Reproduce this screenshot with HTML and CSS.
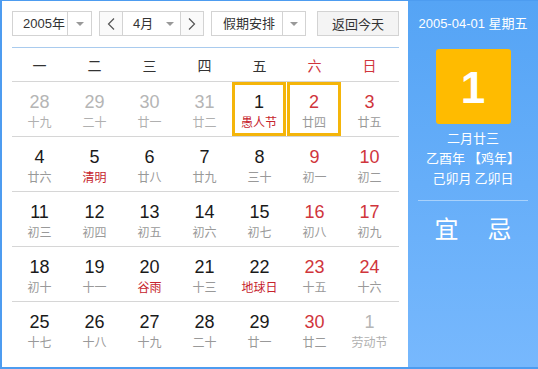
FILE: index.html
```html
<!DOCTYPE html>
<html lang="zh-CN">
<head>
  <meta charset="UTF-8" />
  <title>万年历</title>
  <link rel="stylesheet" href="styles.css">
</head>
<body>
  <div class="calendar">
    <div class="main">
      <!-- 顶部工具栏 -->
      <div class="toolbar">
        <div class="select year-select">
          <span class="label">2005年</span>
          <span class="arrow-box"><i class="caret"></i></span>
        </div>
        <div class="select month-select">
          <span class="nav prev">
            <svg width="8" height="12" viewBox="0 0 8 12"><polyline points="7,0.5 1.5,6 7,11.5" fill="none" stroke="#555" stroke-width="1.2"/></svg>
          </span>
          <span class="label month-label">4月<i class="caret"></i></span>
          <span class="nav next">
            <svg width="8" height="12" viewBox="0 0 8 12"><polyline points="1,0.5 6.5,6 1,11.5" fill="none" stroke="#555" stroke-width="1.2"/></svg>
          </span>
        </div>
        <div class="select holiday-select">
          <span class="label">假期安排</span>
          <span class="arrow-box"><i class="caret"></i></span>
        </div>
        <button class="today-btn">返回今天</button>
      </div>

      <!-- 星期 -->
      <div class="weekdays">
        <span>一</span><span>二</span><span>三</span><span>四</span><span>五</span>
        <span class="weekend">六</span><span class="weekend">日</span>
      </div>

      <!-- 日期 -->
      <div class="days">
        <div class="row">
          <div class="day other"><b>28</b><small>十九</small></div>
          <div class="day other"><b>29</b><small>二十</small></div>
          <div class="day other"><b>30</b><small>廿一</small></div>
          <div class="day other"><b>31</b><small>廿二</small></div>
          <div class="day active"><b>1</b><small class="fest">愚人节</small></div>
          <div class="day active weekend"><b>2</b><small>廿四</small></div>
          <div class="day weekend"><b>3</b><small>廿五</small></div>
        </div>
        <div class="row">
          <div class="day"><b>4</b><small>廿六</small></div>
          <div class="day"><b>5</b><small class="fest">清明</small></div>
          <div class="day"><b>6</b><small>廿八</small></div>
          <div class="day"><b>7</b><small>廿九</small></div>
          <div class="day"><b>8</b><small>三十</small></div>
          <div class="day weekend"><b>9</b><small>初一</small></div>
          <div class="day weekend"><b>10</b><small>初二</small></div>
        </div>
        <div class="row">
          <div class="day"><b>11</b><small>初三</small></div>
          <div class="day"><b>12</b><small>初四</small></div>
          <div class="day"><b>13</b><small>初五</small></div>
          <div class="day"><b>14</b><small>初六</small></div>
          <div class="day"><b>15</b><small>初七</small></div>
          <div class="day weekend"><b>16</b><small>初八</small></div>
          <div class="day weekend"><b>17</b><small>初九</small></div>
        </div>
        <div class="row">
          <div class="day"><b>18</b><small>初十</small></div>
          <div class="day"><b>19</b><small>十一</small></div>
          <div class="day"><b>20</b><small class="fest">谷雨</small></div>
          <div class="day"><b>21</b><small>十三</small></div>
          <div class="day"><b>22</b><small class="fest">地球日</small></div>
          <div class="day weekend"><b>23</b><small>十五</small></div>
          <div class="day weekend"><b>24</b><small>十六</small></div>
        </div>
        <div class="row">
          <div class="day"><b>25</b><small>十七</small></div>
          <div class="day"><b>26</b><small>十八</small></div>
          <div class="day"><b>27</b><small>十九</small></div>
          <div class="day"><b>28</b><small>二十</small></div>
          <div class="day"><b>29</b><small>廿一</small></div>
          <div class="day weekend"><b>30</b><small>廿二</small></div>
          <div class="day other"><b>1</b><small>劳动节</small></div>
        </div>
      </div>
    </div>

    <!-- 右侧详情 -->
    <div class="side">
      <div class="side-date">2005-04-01 星期五</div>
      <div class="big-day">1</div>
      <div class="lunar">
        <p>二月廿三</p>
        <p>乙酉年 【鸡年】</p>
        <p>己卯月 乙卯日</p>
      </div>
      <div class="divider"></div>
      <div class="yiji">
        <span>宜</span><span>忌</span>
      </div>
    </div>
  </div>
</body>
</html>
```

FILE: styles.css
```css
body {
  margin: 0;
  padding: 0;
  font-family: "Liberation Sans", Arial, "Noto Sans CJK SC", sans-serif;
  background: #fff;
}

.calendar {
  display: flex;
  width: 538px;
  height: 369px;
  box-sizing: border-box;
  border: 2px solid #4d9cf0;
  border-top-width: 1px;
  border-right: none;
}

.main {
  width: 406px;
  padding: 10px 9px 0 10px;
  box-sizing: border-box;
  background: #fff;
}

/* 工具栏 */
.toolbar {
  display: flex;
  height: 25px;
  font-size: 13px;
  color: #333;
}

.select {
  display: flex;
  height: 25px;
  box-sizing: border-box;
  border: 1px solid #d3d3d3;
  background: #fff;
  margin-right: 7px;
}

.select .label {
  display: flex;
  align-items: center;
  padding-left: 10px;
  line-height: 23px;
  white-space: nowrap;
}

.year-select {
  width: 80px;
}

.year-select .label {
  width: 54px;
  box-sizing: border-box;
}

.holiday-select {
  width: 95px;
}

.holiday-select .label {
  width: 70px;
  box-sizing: border-box;
  padding-left: 11px;
}

.arrow-box {
  flex: 1;
  display: flex;
  align-items: center;
  justify-content: center;
  border-left: 1px solid #d3d3d3;
}

.caret {
  display: inline-block;
  width: 0;
  height: 0;
  border-left: 4px solid transparent;
  border-right: 4px solid transparent;
  border-top: 4px solid #999;
}

.month-select {
  width: 105px;
}

.nav {
  width: 22px;
  display: flex;
  align-items: center;
  justify-content: center;
  background: #fafafa;
}

.prev {
  border-right: 1px solid #d3d3d3;
}

.next {
  border-left: 1px solid #d3d3d3;
}

.month-label {
  flex: 1;
  min-width: 0;
}

.month-label .caret {
  margin-left: 13px;
}

.today-btn {
  margin-left: auto;
  width: 82px;
  height: 25px;
  padding: 0;
  border: 1px solid #d3d3d3;
  background: #f4f4f4;
  font-family: "Liberation Sans", "Noto Sans CJK SC", sans-serif;
  font-size: 13px;
  color: #333;
}

/* 星期 */
.weekdays {
  display: grid;
  grid-template-columns: repeat(7, 55px);
  margin-top: 11px;
  border-top: 1px solid #a9cbee;
  border-bottom: 1px solid #d6d6d6;
  height: 33px;
  align-items: center;
  text-align: center;
  font-family: "Noto Sans CJK SC", sans-serif;
  font-size: 14px;
  color: #333;
}

.weekdays .weekend {
  color: #d0353c;
}

/* 日期 */
.row {
  display: grid;
  grid-template-columns: repeat(7, 55px);
  height: 54px;
  border-bottom: 1px solid #d6d6d6;
}

.row:last-child {
  border-bottom: none;
}

.day {
  display: flex;
  flex-direction: column;
  align-items: center;
  padding-top: 10px;
  box-sizing: border-box;
}

.day b {
  font-weight: normal;
  font-size: 18px;
  line-height: 20px;
  color: #1a1a1a;
}

.day small {
  margin-top: 2px;
  font-family: "Noto Sans CJK SC", sans-serif;
  font-size: 12px;
  line-height: 16px;
  color: #999;
}

.day.weekend b {
  color: #d0353c;
}

.day small.fest {
  color: #c6232d;
}

.day.other b {
  color: #b5b5b5;
}

.day.other small {
  color: #b0b0b0;
}

.day.active {
  border: 3px solid #f4b50a;
  margin-right: 1px;
  padding-top: 7px;
}

/* 右侧 */
.side {
  flex: 1;
  display: flex;
  flex-direction: column;
  align-items: center;
  background: linear-gradient(#55a4f5, #77b8fd);
  color: #fff;
}

.side-date {
  margin-top: 13px;
  line-height: 20px;
  font-size: 13px;
}

.big-day {
  margin-top: 15px;
  width: 75px;
  height: 75px;
  box-sizing: border-box;
  padding-top: 3px;
  border-radius: 3px;
  background: #ffbb00;
  text-align: center;
  line-height: 72px;
  font-size: 44px;
  font-weight: bold;
}

.lunar {
  margin-top: 4px;
  text-align: center;
  font-family: "Noto Sans CJK SC", sans-serif;
  font-size: 13px;
}

.lunar p {
  margin: 0;
  line-height: 20px;
}

.divider {
  margin-top: 12px;
  width: 110px;
  height: 1px;
  background: #a8d1fb;
}

.yiji {
  display: flex;
  gap: 29px;
  margin-top: 12px;
  line-height: 30px;
  font-family: "Noto Sans CJK SC", sans-serif;
  font-size: 24px;
}
```
